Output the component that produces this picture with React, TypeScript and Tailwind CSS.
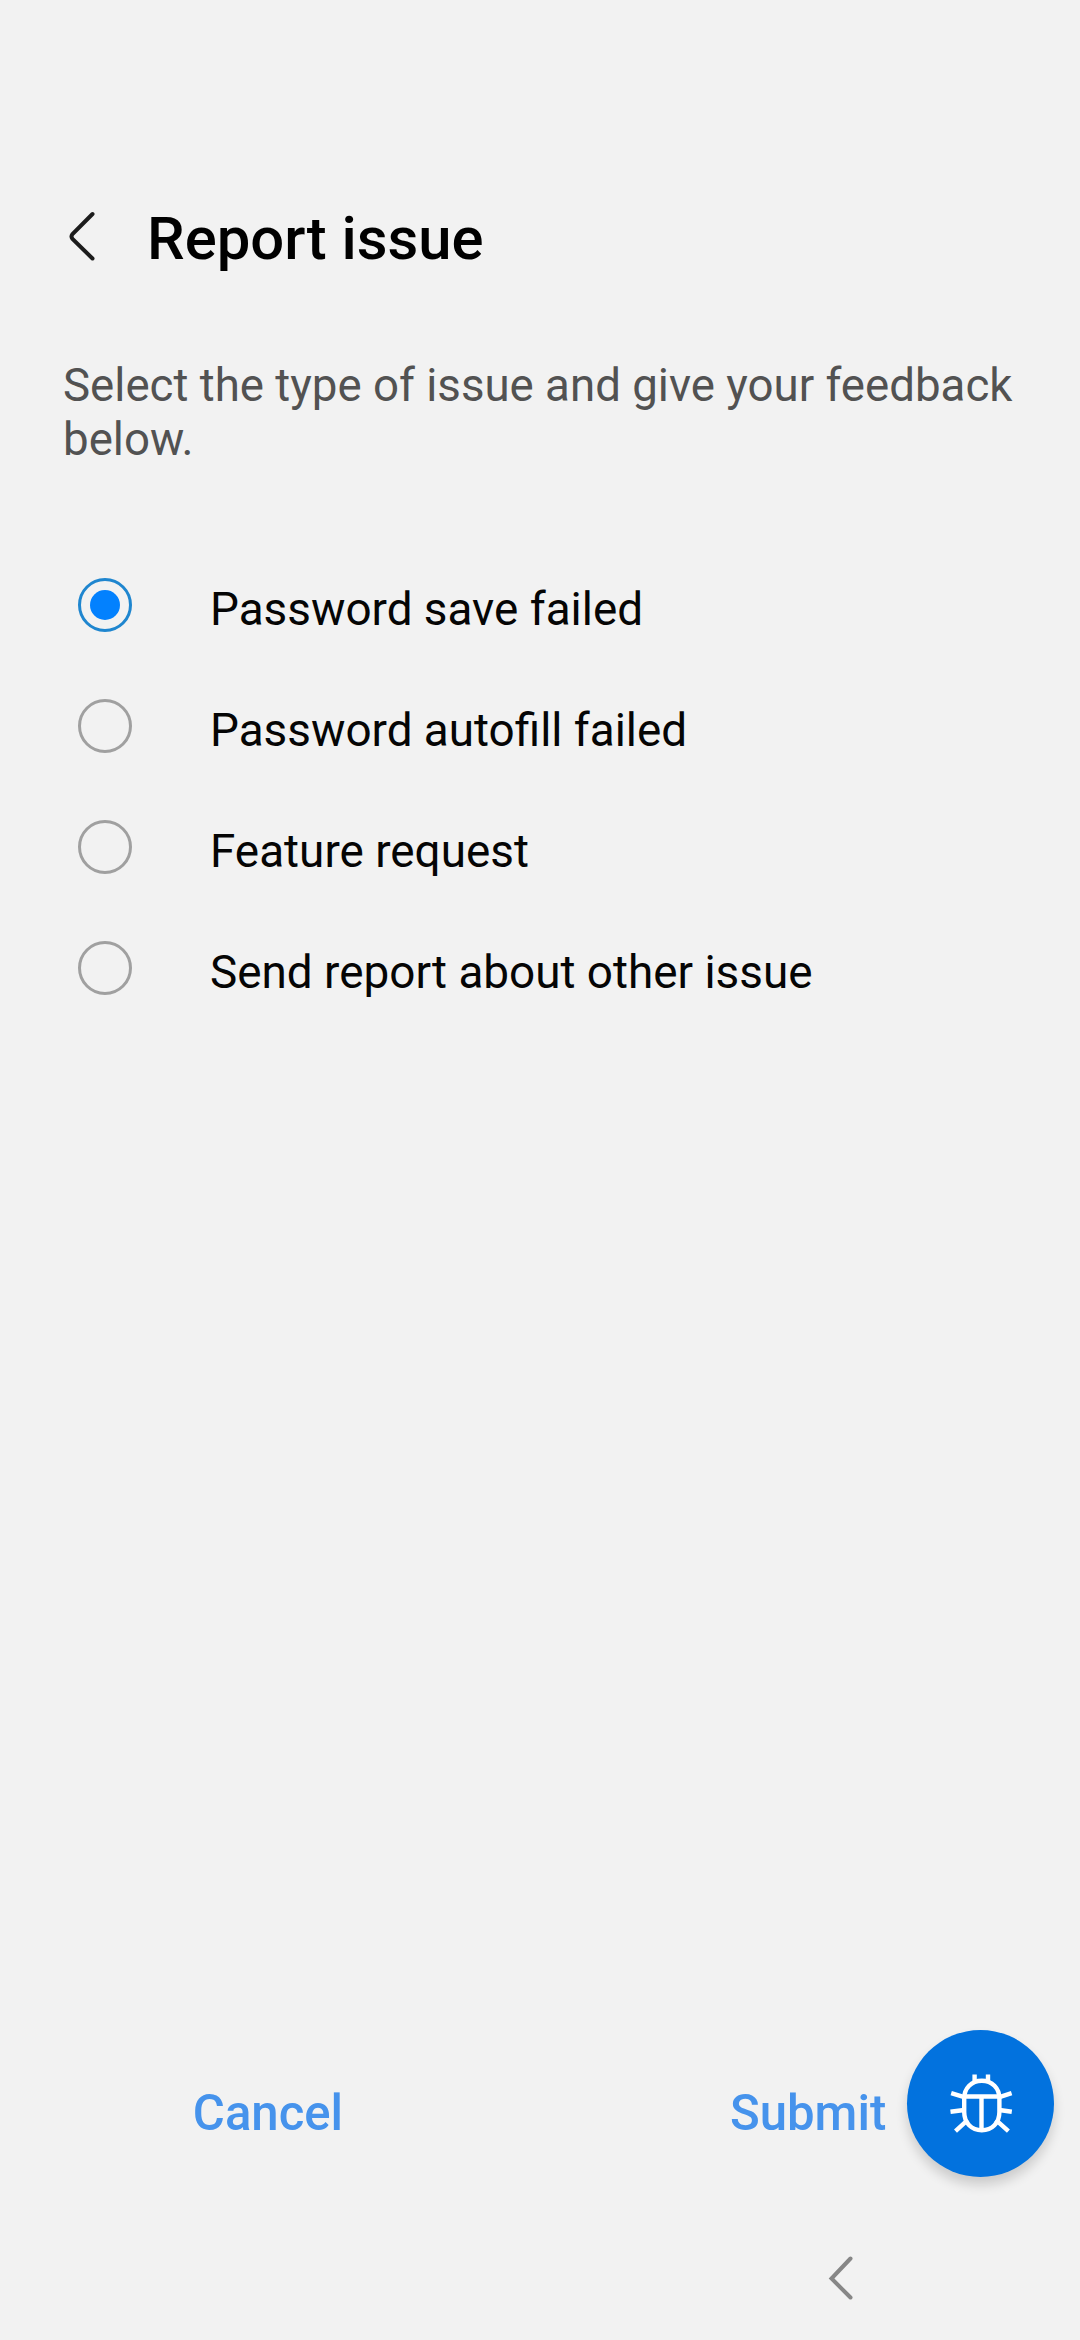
import { useState } from 'react';

const issueTypes = [
  'Password save failed',
  'Password autofill failed',
  'Feature request',
  'Send report about other issue',
];

function BugIcon() {
  return (
    <svg
      className="w-[62px] h-[62px] overflow-visible"
      viewBox="0 0 62 62"
      fill="none"
      stroke="currentColor"
      strokeWidth={4.4}
      aria-hidden="true"
    >
      {/* Shell */}
      <path d="M14.2 25.5C14.2 15 21.5 7.8 31.8 7.8S49.4 15 49.4 25.5V39C49.4 50 42 57.2 31.8 57.2S14.2 50 14.2 39Z" />
      <path d="M14.2 23.5H49.4M31.5 23.5V57" />
      {/* Antennae */}
      <path d="M24.6 9V1.5M38 9V1.5" />
      {/* Legs */}
      <path d="M14.2 24.2L1.2 20.2M49.4 24.2L61.6 20.2M14.2 37L.5 38.8M49.4 37L61.8 38.8M17.8 46.8L5.5 58.2M45.8 46.8L58.4 58.2" />
    </svg>
  );
}

function RadioOption({ label, checked, onSelect }: { label: string; checked: boolean; onSelect: () => void }) {
  return (
    <button
      type="button"
      role="radio"
      aria-checked={checked}
      onClick={onSelect}
      className="flex h-[121px] items-center gap-[78px] text-left"
    >
      <span
        className={`flex size-[54px] items-center justify-center rounded-full border-3 ${
          checked ? 'border-[#1f86cf]' : 'border-[#a0a0a0]'
        }`}
      >
        {checked && <span className="size-[30px] rounded-full bg-[#0381fe]" />}
      </span>
      <span className="pt-[9px] text-[45.85px] leading-[54px] text-[#050505]">{label}</span>
    </button>
  );
}

export default function App() {
  const [selected, setSelected] = useState(0);

  return (
    <div className="flex h-[2340px] w-[1080px] flex-col overflow-hidden bg-[#f2f2f2] font-[Roboto,sans-serif]">
      {/* Header */}
      <header className="flex items-center gap-[51px] pt-[197px] pl-[68px]">
        <button type="button" aria-label="Back">
          <svg className="h-[50px] w-7" viewBox="0 0 28 50" fill="none" stroke="#1c1c1c" strokeWidth={4} strokeLinecap="round">
            <path d="M24.5 3L4.5 23Q2.5 25.5 4.5 28L24.5 47.5" />
          </svg>
        </button>
        <h1 className="pt-1.5 text-[59.8px] leading-[72px] font-medium text-black">Report issue</h1>
      </header>

      <main className="flex-1">
        <p className="mt-[84px] pr-10 pl-[63px] text-[45.65px] leading-[54px] text-[#525252]">
          Select the type of issue and give your feedback below.
        </p>
        <div role="radiogroup" className="mt-[77px] flex flex-col pl-[78px]">
          {issueTypes.map((label, i) => (
            <RadioOption key={label} label={label} checked={selected === i} onSelect={() => setSelected(i)} />
          ))}
        </div>
      </main>

      {/* Action bar with the floating bug button at its end */}
      <footer className="flex h-[147px] items-center text-[49.1px] leading-[56px] font-medium text-[#4693ec]">
        <button type="button" className="w-[536px] pt-[19px]">Cancel</button>
        <button type="button" className="ml-[194px] pt-[19px]">Submit</button>
        <button
          type="button"
          aria-label="Report a bug"
          className="mr-[26px] ml-auto flex size-[147px] items-center justify-center rounded-full bg-[#0272de] text-white shadow-[0_8px_12px_rgba(0,0,0,0.16)]"
        >
          <BugIcon />
        </button>
      </footer>

      {/* System navigation */}
      <nav className="flex h-[163px] pt-[79px] pl-[827px]">
        <button type="button" aria-label="System back" className="h-11">
          <svg className="h-11 w-7" viewBox="0 0 28 44" fill="none" stroke="#878787" strokeWidth={4} strokeLinecap="round">
            <path d="M23.5 2.5L4.5 22.5L23.5 41.5" />
          </svg>
        </button>
      </nav>
    </div>
  );
}
